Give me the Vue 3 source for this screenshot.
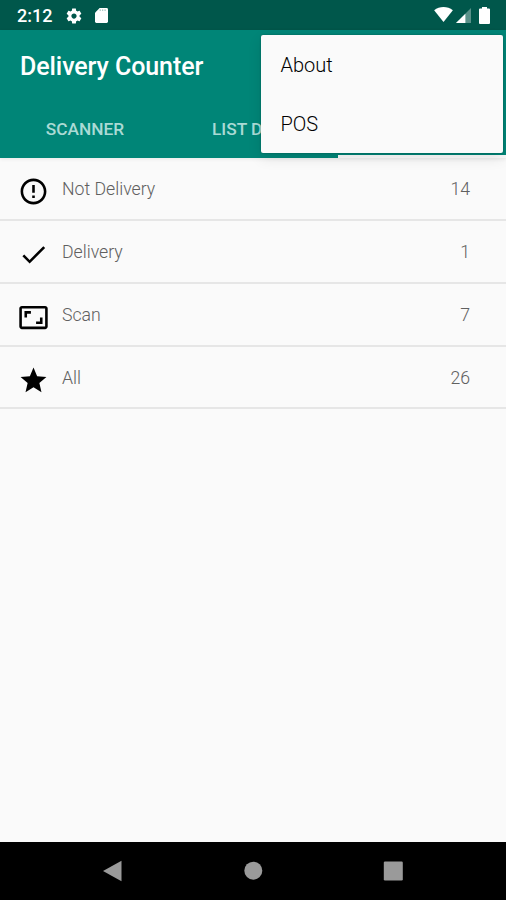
<script setup>
const tabs = ['Scanner', 'List D', '']
const menu = ['About', 'POS']
const rows = [
  { label: 'Not Delivery', count: 14, icon: 'M11 15h2v2h-2zm0-8h2v6h-2zm.99-5C6.47 2 2 6.48 2 12s4.47 10 9.99 10C17.52 22 22 17.52 22 12S17.52 2 11.99 2zM12 20c-4.42 0-8-3.58-8-8s3.58-8 8-8 8 3.58 8 8-3.58 8-8 8z' },
  { label: 'Delivery', count: 1, icon: 'M9 16.17L4.83 12l-1.42 1.41L9 19 21 7l-1.41-1.41z' },
  { label: 'Scan', count: 7, icon: 'M19 12h-2v3h-3v2h5v-5zM7 9h3V7H5v5h2V9zm14-6H3c-1.1 0-2 .9-2 2v14c0 1.1.9 2 2 2h18c1.1 0 2-.9 2-2V5c0-1.1-.9-2-2-2zm0 16.01H3V4.99h18v14.02z' },
  { label: 'All', count: 26, icon: 'M12 17.27L18.18 21l-1.64-7.03L22 9.24l-7.19-.61L12 2 9.19 8.63 2 9.24l5.46 4.73L5.82 21z' },
]
</script>

<template>
  <div class="screen">
    <div class="status">
      <span class="clock">2:12</span>
      <svg class="gear" viewBox="0 0 24 24"><path fill-rule="evenodd" d="M19.43 12.98c.04-.32.07-.64.07-.98s-.03-.66-.07-.98l2.11-1.65c.19-.15.24-.42.12-.64l-2-3.46c-.12-.22-.39-.3-.61-.22l-2.49 1c-.52-.4-1.08-.73-1.69-.98l-.38-2.65C14.46 2.18 14.25 2 14 2h-4c-.25 0-.46.18-.49.42l-.38 2.65c-.61.25-1.17.59-1.69.98l-2.49-1c-.23-.09-.49 0-.61.22l-2 3.46c-.13.22-.07.49.12.64l2.11 1.65c-.04.32-.07.65-.07.98s.03.66.07.98l-2.11 1.65c-.19.15-.24.42-.12.64l2 3.46c.12.22.39.3.61.22l2.49-1c.52.4 1.08.73 1.69.98l.38 2.65c.03.24.24.42.49.42h4c.25 0 .46-.18.49-.42l.38-2.65c.61-.25 1.17-.59 1.69-.98l2.49 1c.23.09.49 0 .61-.22l2-3.46c.12-.22.07-.49-.12-.64l-2.11-1.65zM12 15.5c-1.93 0-3.5-1.57-3.5-3.5s1.57-3.5 3.5-3.5 3.5 1.57 3.5 3.5-1.57 3.5-3.5 3.5z" /></svg>
      <svg class="sd" viewBox="0 0 14 16"><path d="M5 0h7.5Q14 0 14 1.5v13q0 1.500-1.500 1.500h-11Q0 16 0 14.500V5z" /><path class="pins" d="M5 1.500h1.300v1.500H5zM7.600 1.500h1.300v1.500H7.600zM10.200 1.500h1.300v1.500h-1.300z" /></svg>
      <span class="spacer" />
      <svg class="wifi" viewBox="0 0 20 16"><path d="M10 16L0 3.500Q4.500 0 10 0t10 3.500z" /></svg>
      <svg class="signal" viewBox="0 0 16 16"><path opacity=".35" d="M16 0v16H0z" /><path d="M10 6v10H0z" /></svg>
      <svg class="battery" viewBox="0 0 11 17"><path d="M3 0h5v1.500h2q1 0 1 1V16q0 1-1 1H1q-1 0-1-1V2.500q0-1 1-1h2z" /></svg>
    </div>

    <header class="appbar">
      <h1 class="title">Delivery Counter</h1>
      <nav class="tabs">
        <div v-for="(tab, i) in tabs" :key="i" class="tab" :class="{ active: i === 2 }">{{ tab }}</div>
      </nav>
      <div class="menu">
        <div v-for="item in menu" :key="item" class="menu-item">{{ item }}</div>
      </div>
    </header>

    <main class="list">
      <div v-for="row in rows" :key="row.label" class="row">
        <svg class="row-icon" viewBox="0 0 24 24"><path :d="row.icon" /></svg>
        <span class="label">{{ row.label }}</span>
        <span class="count">{{ row.count }}</span>
      </div>
    </main>

    <footer class="navbar">
      <svg viewBox="0 0 22 22"><path d="M1 11L19.500 .800v20.400z" /></svg>
      <svg viewBox="0 0 22 22"><circle cx="11.300" cy="10.700" r="9" /></svg>
      <svg viewBox="0 0 22 22"><rect x="1.800" y="1.500" width="19" height="19" rx="1.200" /></svg>
    </footer>
  </div>
</template>

<style>
body {
  margin: 0;
  background: #fafafa;
}
</style>

<style scoped>
.screen {
  display: flex;
  flex-direction: column;
  width: 506px;
  height: 900px;
  overflow: hidden;
  background: #fafafa;
  font-family: Roboto, sans-serif;
}
svg {
  display: block;
  flex: none;
}
.status {
  display: flex;
  align-items: center;
  box-sizing: border-box;
  height: 30px;
  padding: 1px 16px 0 17px;
  background: #00574b;
  color: #fff;
  fill: #fff;
}
.clock {
  width: 48px;
  font-size: 18px;
  font-weight: 500;
}
.gear {
  width: 18px;
  height: 18px;
}
.sd {
  width: 13px;
  height: 15px;
  margin-left: 12px;
}
.pins {
  fill: #8eb5af;
}
.spacer {
  flex: 1;
}
.wifi {
  width: 19px;
  height: 15px;
  margin-top: -2px;
}
.signal {
  width: 15px;
  height: 15px;
  margin-left: 3px;
}
.battery {
  width: 11px;
  height: 17px;
  margin-top: -1px;
  margin-left: 8px;
}
.appbar {
  position: relative;
  display: flex;
  flex-direction: column;
  flex: none;
  height: 127.500px;
  background: #008577;
  box-shadow: 0 1px 4px rgba(0, 0, 0, 0.08);
}
.title {
  margin: 0;
  padding-left: 20px;
  height: 70px;
  line-height: 73px;
  font-size: 25px;
  font-weight: 500;
  letter-spacing: -0.08px;
  color: #fff;
}
.tabs {
  display: grid;
  grid-template-columns: 169px 169px 1fr;
  flex: 1;
}
.tab {
  box-sizing: border-box;
  border-bottom: 3px solid transparent;
  padding-left: 1px;
  text-align: center;
  text-transform: uppercase;
  line-height: 58px;
  height: 58px;
  font-size: 17.300px;
  font-weight: 500;
  color: #aadad4;
}
.tab:nth-child(2) {
  padding-left: 43px;
  text-align: left;
}
.tab.active {
  border-bottom-color: #fafafa;
}
.menu {
  position: absolute;
  top: 4.500px;
  left: 260.500px;
  width: 242px;
  height: 118.500px;
  border-radius: 2px;
  background: #fafafa;
  box-shadow: 0 5px 14px rgba(0, 0, 0, 0.1), 0 0 2px rgba(0, 0, 0, 0.3);
}
.menu-item {
  height: 59px;
  padding-left: 20px;
  line-height: 61px;
  font-size: 20px;
  font-weight: 300;
  color: #000;
}
.list {
  flex: 1;
  padding-top: 0.500px;
}
.row {
  display: flex;
  align-items: flex-start;
  box-sizing: border-box;
  height: 62.800px;
  padding: 0 36px 0 18px;
  border-bottom: 2px solid #e6e6e6;
}
.row:first-child {
  height: 63px;
}
.row-icon {
  width: 31px;
  height: 31px;
  margin-top: 18px;
}
.label,
.count {
  line-height: 63px;
  font-size: 17.700px;
  font-weight: 300;
  color: #606060;
}
.label {
  flex: 1;
  margin-left: 13px;
}
.navbar {
  display: flex;
  align-items: center;
  justify-content: space-between;
  box-sizing: border-box;
  height: 58px;
  padding: 0 102px;
  background: #000;
  fill: #9a9a9a;
}
.navbar svg {
  width: 22px;
  height: 22px;
}
</style>
